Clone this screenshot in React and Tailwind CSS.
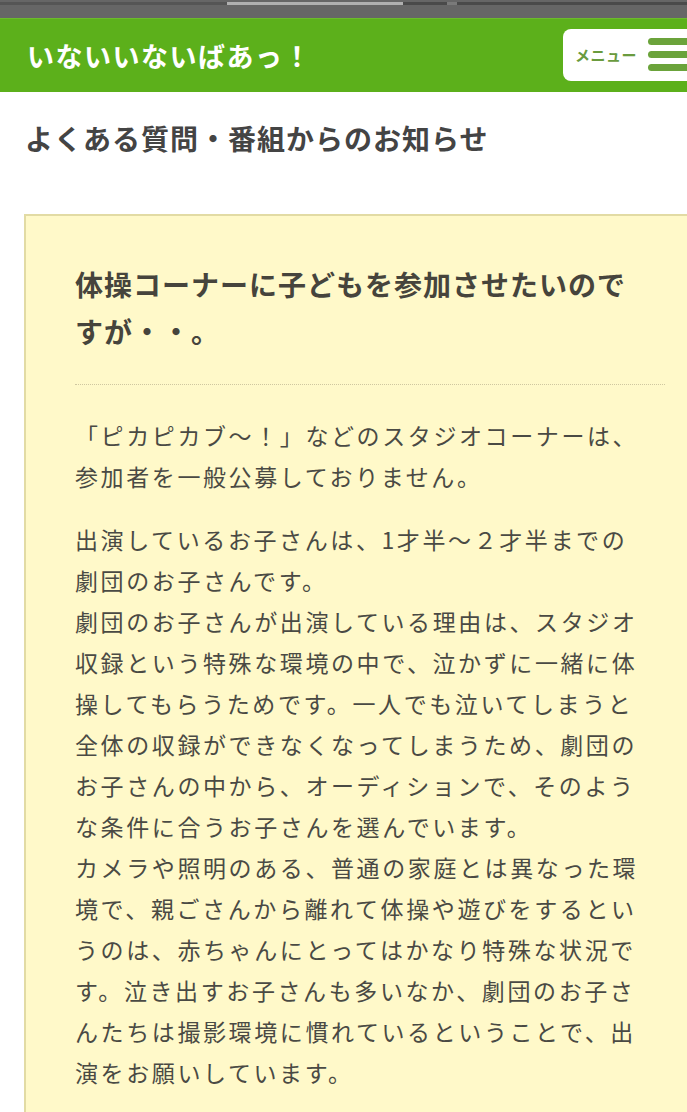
import React from 'react'

const font = { fontFamily: '"Noto Sans CJK JP", "Noto Sans", sans-serif' }

const para1 = [
  '「ピカピカブ〜！」などのスタジオコーナーは、',
  '参加者を一般公募しておりません。',
]

const para2 = [
  '出演しているお子さんは、1才半〜２才半までの',
  '劇団のお子さんです。',
  '劇団のお子さんが出演している理由は、スタジオ',
  '収録という特殊な環境の中で、泣かずに一緒に体',
  '操してもらうためです。一人でも泣いてしまうと',
  '全体の収録ができなくなってしまうため、劇団の',
  'お子さんの中から、オーディションで、そのよう',
  'な条件に合うお子さんを選んでいます。',
  'カメラや照明のある、普通の家庭とは異なった環',
  '境で、親ごさんから離れて体操や遊びをするとい',
  'うのは、赤ちゃんにとってはかなり特殊な状況で',
  'す。泣き出すお子さんも多いなか、劇団のお子さ',
  'んたちは撮影環境に慣れているということで、出',
  '演をお願いしています。',
]

function Lines({ lines }) {
  return (
    <p className="text-[23px] leading-[41px] tracking-[2.6px] text-[#4a4a44] whitespace-nowrap">
      {lines.map((l, i) => (
        <React.Fragment key={i}>
          {l}
          {i < lines.length - 1 && <br />}
        </React.Fragment>
      ))}
    </p>
  )
}

export default function App() {
  return (
    <div className="w-[687px] h-[1112px] overflow-hidden bg-white" style={font}>
      {/* browser chrome strip */}
      <div className="h-[18px] bg-[#666666] flex flex-col">
        <div className="h-[2px]" />
        <div className="h-[3px] flex">
          <div className="w-[227px] bg-[#555555]" />
          <div className="w-[176px] bg-[#b0b0b0]" />
          <div className="w-[44px] bg-[#4a4a4a]" />
          <div className="w-[10px] bg-[#7a7a7a]" />
          <div className="flex-1 bg-[#4a4a4a]" />
        </div>
      </div>

      {/* header */}
      <header className="h-[74px] bg-[#5cb01b] border-t border-[#6cbb2c] flex items-center justify-between pl-[27px]">
        <h1 className="text-white font-bold text-[27px] tracking-[1.5px] leading-none">いないいないばあっ！</h1>
        <div className="w-[140px] h-[52px] mr-[-16px] bg-white rounded-[8px] flex items-center pl-[12px] gap-[11px] self-center mt-[-2px]">
          <span className="text-[#6a9b3e] font-bold text-[15px] leading-none tracking-[0.5px]">メニュー</span>
          <div className="flex flex-col gap-[6px]">
            <span className="block w-[46px] h-[7px] rounded-full bg-[#6ba33b]" />
            <span className="block w-[46px] h-[7px] rounded-full bg-[#6ba33b]" />
            <span className="block w-[46px] h-[7px] rounded-full bg-[#6ba33b]" />
          </div>
        </div>
      </header>

      {/* section title */}
      <h2 className="mt-[25px] pl-[25px] text-[28px] leading-[42px] font-bold text-[#444444] tracking-[1px]">
        よくある質問・番組からのお知らせ
      </h2>

      {/* Q&A box */}
      <div className="mt-[55px] ml-[24px] w-[690px] border-2 border-[#e2dba4] bg-[#fff9c9] pt-[45px] pl-[49px] pr-[47px] pb-[60px]">
        <h3 className="text-[28px] leading-[46.5px] font-bold text-[#46443c] tracking-[1px]">
          体操コーナーに子どもを参加させたいので
          <br />
          すが・・。
        </h3>
        <div className="mt-[30px] border-t border-dotted border-[#cfc7a0]" />
        <div className="mt-[30px] flex flex-col gap-[22px]">
          <Lines lines={para1} />
          <Lines lines={para2} />
        </div>
      </div>
    </div>
  )
}
